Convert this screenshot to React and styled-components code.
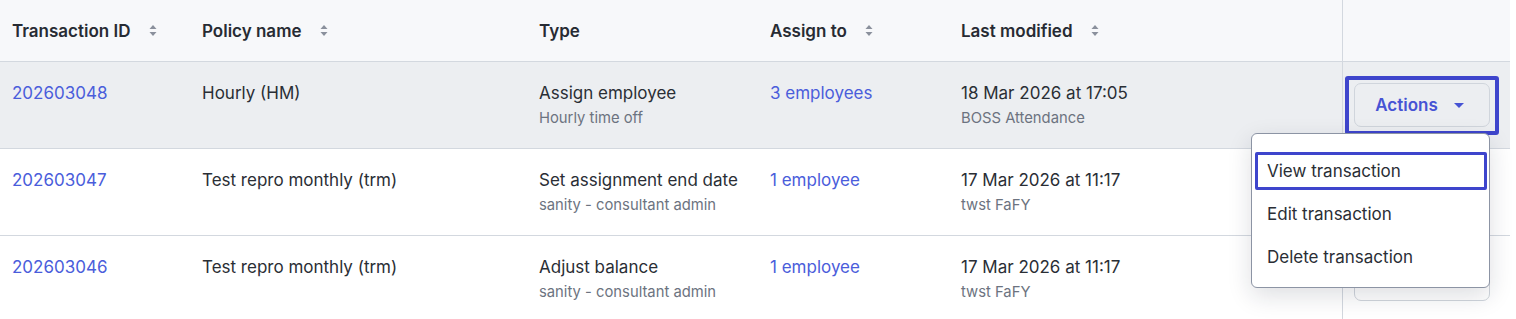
import React from "react";
import styled, { createGlobalStyle } from "styled-components";

const GlobalStyle = createGlobalStyle`
  html, body { margin: 0; padding: 0; background: #ffffff; }
  body { font-family: Inter, "Noto Sans", "Liberation Sans", sans-serif; color: #2a2e35; }
  * { box-sizing: border-box; }
`;

const COLS = "190px 337px 231px 191px 393px 168px";

const Table = styled.div`
  width: 1510px;
  display: flex;
  flex-direction: column;
`;

const HeaderRow = styled.div`
  display: grid;
  grid-template-columns: ${COLS};
  height: 62px;
  background: #f7f8fa;
  border-bottom: 1px solid #d3d8df;
`;

const HeaderCell = styled.div`
  display: flex;
  align-items: center;
  gap: 18px;
  padding-left: 12px;
  font-size: 17px;
  font-weight: 600;
  color: #272b33;
  border-left: ${(p) => (p.$sticky ? "1px solid #d3d8df" : "none")};
`;

const Row = styled.div`
  display: grid;
  grid-template-columns: ${COLS};
  height: 87px;
  background: ${(p) => (p.$hover ? "#eceef1" : "#ffffff")};
  border-bottom: 1px solid #d3d8df;
`;

const Cell = styled.div`
  padding: 19px 12px 0 12px;
  display: flex;
  flex-direction: column;
  white-space: nowrap;
`;

const Primary = styled.span`
  font-size: 17px;
  line-height: 24px;
  color: #2a2e35;
`;

const Secondary = styled.span`
  font-size: 14.8px;
  line-height: 20px;
  margin-top: 3px;
  color: #6c7380;
`;

const Link = styled.a`
  font-size: 17px;
  line-height: 24px;
  color: #4a5ddb;
  text-decoration: none;
  cursor: pointer;
`;

const ActionsCell = styled.div`
  position: relative;
  border-left: 1px solid #d3d8df;
  display: flex;
  justify-content: flex-end;
  align-items: flex-start;
  padding: 21px 20px 0 0;
`;

const ActionsButton = styled.button`
  position: relative;
  width: 136px;
  height: 44px;
  display: flex;
  align-items: center;
  justify-content: center;
  gap: 11px;
  background: transparent;
  border: 1px solid #d0d5dc;
  border-radius: 7px;
  font-family: inherit;
  font-size: 17px;
  font-weight: 600;
  color: #4653d4;
  padding: 0;
  outline: none;

  &::after {
    content: "";
    display: ${(p) => (p.$focused ? "block" : "none")};
    position: absolute;
    inset: -8px -10px -9px -10px;
    border: 4px solid #3e45cc;
    border-radius: 3px;
    pointer-events: none;
  }
`;

const Menu = styled.div`
  position: absolute;
  z-index: 10;
  top: 71px;
  right: 20px;
  width: 239px;
  background: #ffffff;
  border: 1px solid #8c94a4;
  border-radius: 6px;
  box-shadow: 0 8px 24px rgba(20, 30, 50, 0.14);
  padding: 15px 0 9px 0;
  display: flex;
  flex-direction: column;
`;

const MenuItem = styled.div`
  position: relative;
  height: 43px;
  display: flex;
  align-items: center;
  padding-left: 15px;
  font-size: 17px;
  color: #2a2e35;

  &::after {
    content: "";
    display: ${(p) => (p.$focused ? "block" : "none")};
    position: absolute;
    inset: 3px 2px 2px 3px;
    border: 3px solid #3e45cc;
    border-radius: 2px;
    pointer-events: none;
  }
`;

const SortIcon = () => (
  <svg width="8" height="13" viewBox="0 0 8 13" aria-hidden="true">
    <path d="M0.5 5 L4 1 L7.5 5 Z" fill="#8a909c" />
    <path d="M0.5 8 L4 12 L7.5 8 Z" fill="#8a909c" />
  </svg>
);

const Caret = () => (
  <svg width="20" height="20" viewBox="0 0 20 20" aria-hidden="true">
    <path d="M5 8 L15 8 L10 13 Z" fill="#4653d4" />
  </svg>
);

const headers = [
  { label: "Transaction ID", sort: true },
  { label: "Policy name", sort: true },
  { label: "Type", sort: false },
  { label: "Assign to", sort: true },
  { label: "Last modified", sort: true },
];

const rows = [
  {
    id: "202603048",
    policy: "Hourly (HM)",
    type: "Assign employee",
    typeSub: "Hourly time off",
    assign: "3 employees",
    date: "18 Mar 2026 at 17:05",
    by: "BOSS Attendance",
    hover: true,
    menu: true,
  },
  {
    id: "202603047",
    policy: "Test repro monthly (trm)",
    type: "Set assignment end date",
    typeSub: "sanity - consultant admin",
    assign: "1 employee",
    date: "17 Mar 2026 at 11:17",
    by: "twst FaFY",
  },
  {
    id: "202603046",
    policy: "Test repro monthly (trm)",
    type: "Adjust balance",
    typeSub: "sanity - consultant admin",
    assign: "1 employee",
    date: "17 Mar 2026 at 11:17",
    by: "twst FaFY",
  },
];

export default function App() {
  return (
    <>
      <GlobalStyle />
      <Table>
        <HeaderRow>
          {headers.map((h) => (
            <HeaderCell key={h.label}>
              {h.label}
              {h.sort && <SortIcon />}
            </HeaderCell>
          ))}
          <HeaderCell $sticky />
        </HeaderRow>
        {rows.map((r) => (
          <Row key={r.id} $hover={r.hover}>
            <Cell>
              <Link>{r.id}</Link>
            </Cell>
            <Cell>
              <Primary>{r.policy}</Primary>
            </Cell>
            <Cell>
              <Primary>{r.type}</Primary>
              <Secondary>{r.typeSub}</Secondary>
            </Cell>
            <Cell>
              <Link>{r.assign}</Link>
            </Cell>
            <Cell>
              <Primary>{r.date}</Primary>
              <Secondary>{r.by}</Secondary>
            </Cell>
            <ActionsCell>
              <ActionsButton $focused={r.menu}>
                Actions
                <Caret />
              </ActionsButton>
              {r.menu && (
                <Menu>
                  <MenuItem $focused>View transaction</MenuItem>
                  <MenuItem>Edit transaction</MenuItem>
                  <MenuItem>Delete transaction</MenuItem>
                </Menu>
              )}
            </ActionsCell>
          </Row>
        ))}
      </Table>
    </>
  );
}
